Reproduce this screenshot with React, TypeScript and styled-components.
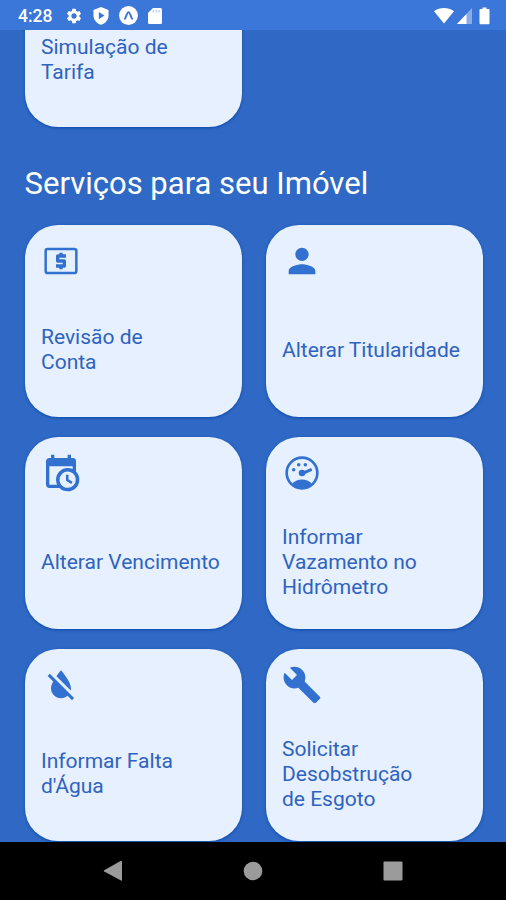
import React from 'react';
import styled, { createGlobalStyle } from 'styled-components';
import { MdPerson, MdFormatColorReset, MdBuild, MdSettings } from 'react-icons/md';

const GlobalStyle = createGlobalStyle`
  * { box-sizing: border-box; }
  body { margin: 0; background: #2f69c5; font-family: Roboto, "Liberation Sans", sans-serif; }
`;

const Screen = styled.div`
  width: 506px;
  height: 900px;
  display: flex;
  flex-direction: column;
  overflow: hidden;
  background: #2f69c5;
`;

const StatusBar = styled.header`
  flex: 0 0 30px;
  display: flex;
  align-items: center;
  justify-content: space-between;
  padding: 1px 16.5px 0 18px;
  background: #3a77d8;
  color: #fff;
`;

const StatusGroup = styled.div<{ $gap: number }>`
  display: flex;
  align-items: center;
  gap: ${(p) => p.$gap}px;
  svg { display: block; }
`;

const Clock = styled.span`
  width: 35px;
  margin-right: 2px;
  font-size: 17.5px;
  font-weight: 500;
  line-height: 20px;
  white-space: nowrap;
`;

const BatterySlot = styled.span`
  margin-left: 4px;
`;

const Content = styled.main`
  flex: 1;
  min-height: 0;
  overflow: hidden;
  display: flex;
  flex-direction: column;
  justify-content: flex-end;
  padding: 0 23.4px 0.8px 24.6px;
`;

const Grid = styled.div`
  flex: none;
  display: grid;
  grid-template-columns: 217px 217px;
  grid-auto-rows: 192.6px;
  column-gap: 24px;
  row-gap: 19.4px;
`;

const Card = styled.article`
  display: flex;
  flex-direction: column;
  padding: 16.4px 16px 0 16.4px;
  border-radius: 33px;
  background: #e6f0ff;
  color: #3371d0;
  box-shadow: 0 1px 3px #0c48a8;
`;

const IconSlot = styled.div`
  flex: 0 0 40px;
  svg { display: block; }
`;

const LabelArea = styled.div`
  flex: 0 0 138.6px;
  display: flex;
  align-items: center;
`;

const Label = styled.p`
  margin: 0;
  color: #2f63c0;
  font-size: 21px;
  line-height: 25px;
  white-space: pre;
`;

const Heading = styled.h2`
  flex: none;
  margin: 38px 0 21.6px;
  color: #fff;
  font-size: 31px;
  font-weight: 400;
  line-height: 38px;
  white-space: nowrap;
`;

const NavBar = styled.nav`
  flex: 0 0 58px;
  display: grid;
  grid-template-columns: repeat(3, 140px);
  justify-content: center;
  align-items: center;
  justify-items: center;
  background: #000;
`;

const Bill = () => (
  <svg width="40" height="40" viewBox="0 0 24 24" fill="currentColor">
    <rect x="2.8" y="4.8" width="18.4" height="14.4" rx="1.1" fill="none" stroke="currentColor" strokeWidth="1.5" />
    <path d="M11 17h2v-1h1c.55 0 1-.45 1-1v-3c0-.55-.45-1-1-1h-3v-1h4V8h-2V7h-2v1h-1c-.55 0-1 .45-1 1v3c0 .55.45 1 1 1h3v1H9v2h2v1z" />
  </svg>
);

const CalendarClock = () => (
  <svg width="40" height="40" viewBox="0 0 24 24" fill="currentColor">
    <path d="M15,13H16.5V15.82L18.94,17.23L18.19,18.53L15,16.69V13M19,8H5V19H9.67C9.24,18.09 9,17.07 9,16A7,7 0 0,1 16,9C17.07,9 18.09,9.24 19,9.67V8M5,21C3.89,21 3,20.1 3,19V5C3,3.89 3.89,3 5,3H6V1H8V3H16V1H18V3H19A2,2 0 0,1 21,5V11.1C22.24,12.36 23,14.09 23,16A7,7 0 0,1 16,23C14.09,23 12.36,22.24 11.1,21H5M16,11.15A4.85,4.85 0 0,0 11.15,16C11.15,18.68 13.32,20.85 16,20.85A4.85,4.85 0 0,0 20.85,16C20.85,13.32 18.68,11.15 16,11.15Z" />
  </svg>
);

const Gauge = () => (
  <svg width="40" height="40" viewBox="0 0 24 24" fill="currentColor">
    <circle cx="12" cy="12" r="9.2" fill="none" stroke="currentColor" strokeWidth="1.6" />
    <path d="M6.2 18.2C7.7 16.7 9.8 15.9 12 15.9S16.3 16.7 17.8 18.2C16.5 20 14.4 21.3 12 21.3S7.5 20 6.2 18.2Z" />
    <circle cx="7" cy="10" r="1.05" />
    <circle cx="10" cy="7" r="1.05" />
    <circle cx="14" cy="7" r="1.05" />
    <circle cx="12" cy="12" r="2" />
    <path d="M12.4 12.2L17.1 10.1" stroke="currentColor" strokeWidth="1.9" strokeLinecap="round" />
  </svg>
);

const Shield = () => (
  <svg width="16" height="18" viewBox="0 0 16 18">
    <path fill="currentColor" d="M8 0L15.5 3V8.5C15.5 13 12.3 16.5 8 17.7C3.7 16.5 .5 13 .5 8.5V3Z" />
    <path fill="#3a77d8" d="M5.8 5L11.5 8.6L5.8 12.2Z" />
  </svg>
);

const RoundBadge = () => (
  <svg width="19" height="19" viewBox="0 0 19 19">
    <circle cx="9.5" cy="9.5" r="9.4" fill="currentColor" />
    <path d="M5.9 12.8C7.4 10.6 8 6.1 9.5 6.1S11.6 10.6 13.1 12.8" fill="none" stroke="#3a77d8" strokeWidth="1.9" strokeLinecap="round" />
  </svg>
);

const SdCard = () => (
  <svg width="14" height="16" viewBox="0 0 14 16">
    <path fill="currentColor" d="M5 0H12.5Q14 0 14 1.5V14.5Q14 16 12.5 16H1.5Q0 16 0 14.5V5Z" />
    <path stroke="#3a77d8" strokeOpacity=".4" strokeWidth="1.2" d="M5.4 2V4.5M8.2 2V4.5M11 2V4.5" />
  </svg>
);

const Wifi = () => (
  <svg width="20" height="16" viewBox="0 0 20 16">
    <path fill="currentColor" d="M0 3.2C5.8-1 14.2-1 20 3.2L10 15.5Z" />
  </svg>
);

const Signal = () => (
  <svg width="15" height="16" viewBox="0 0 15 16">
    <path fill="currentColor" fillOpacity=".4" d="M15 0V16H0Z" />
    <path fill="currentColor" d="M9.5 5.9V16H0Z" />
  </svg>
);

const Battery = () => (
  <svg width="11" height="18" viewBox="0 0 11 18">
    <path fill="currentColor" d="M3.5 .5H7.5V2H9.5Q10.5 2 10.5 3V16.2Q10.5 17.2 9.5 17.2H1.5Q.5 17.2 .5 16.2V3Q.5 2 1.5 2H3.5Z" />
  </svg>
);

const services = [
  { icon: <Bill />, label: 'Revisão de\nConta' },
  { icon: <MdPerson size={40} />, label: 'Alterar Titularidade' },
  { icon: <CalendarClock />, label: 'Alterar Vencimento' },
  { icon: <Gauge />, label: 'Informar\nVazamento no\nHidrômetro' },
  { icon: <MdFormatColorReset size={40} />, label: 'Informar Falta\nd\'Água' },
  { icon: <MdBuild size={40} />, label: 'Solicitar\nDesobstrução\nde Esgoto' },
];

const ServiceCard = ({ icon, label }: { icon?: React.ReactNode; label: string }) => (
  <Card>
    <IconSlot>{icon}</IconSlot>
    <LabelArea>
      <Label>{label}</Label>
    </LabelArea>
  </Card>
);

export default function App() {
  return (
    <Screen>
      <GlobalStyle />
      <StatusBar>
        <StatusGroup $gap={10}>
          <Clock>4:28</Clock>
          <MdSettings size={18} />
          <Shield />
          <RoundBadge />
          <SdCard />
        </StatusGroup>
        <StatusGroup $gap={3}>
          <Wifi />
          <Signal />
          <BatterySlot>
            <Battery />
          </BatterySlot>
        </StatusGroup>
      </StatusBar>
      <Content>
        <Grid>
          <ServiceCard label={'Simulação de\nTarifa'} />
        </Grid>
        <Heading>Serviços para seu Imóvel</Heading>
        <Grid>
          {services.map((s) => (
            <ServiceCard key={s.label} {...s} />
          ))}
        </Grid>
      </Content>
      <NavBar>
        <svg width="20" height="22" viewBox="0 0 20 22"><path fill="#9b9b9b" d="M1.2 10.2L18 .8Q19 .4 19 1.4V20Q19 21 18 20.5L1.2 11.6Q.3 11 1.2 10.2Z" /></svg>
        <svg width="20" height="20" viewBox="0 0 20 20"><circle cx="10" cy="10" r="9.3" fill="#9b9b9b" /></svg>
        <svg width="20" height="20" viewBox="0 0 20 20"><rect x=".5" y=".5" width="19" height="19" rx="1" fill="#9b9b9b" /></svg>
      </NavBar>
    </Screen>
  );
}
